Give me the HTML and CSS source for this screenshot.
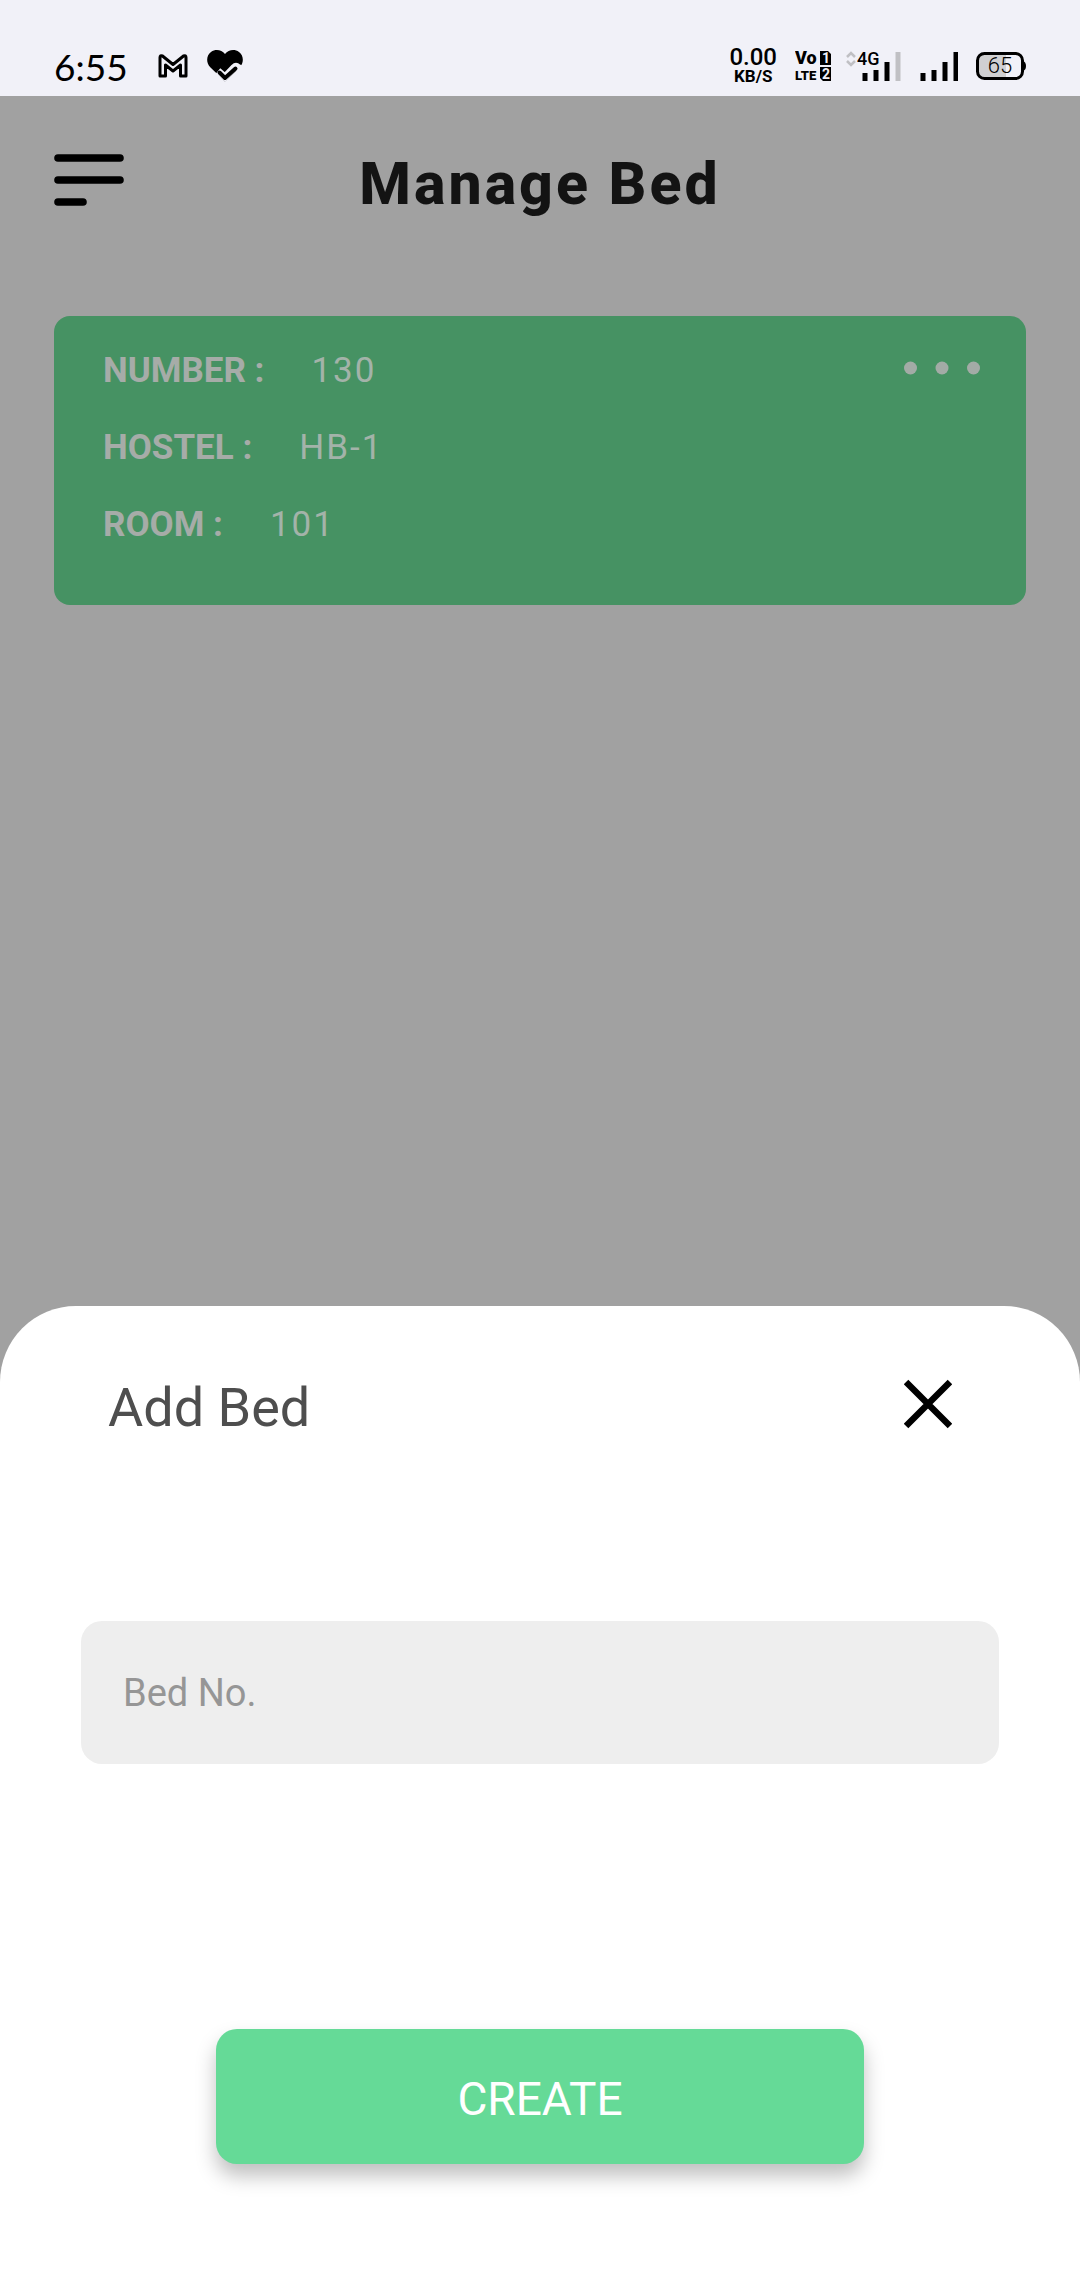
FILE: index.html
```html
<!DOCTYPE html>
<html lang="en">
<head>
  <meta charset="utf-8">
  <meta name="viewport" content="width=device-width, initial-scale=1">
  <title>Manage Bed</title>
  <link rel="stylesheet" href="styles.css">
</head>
<body>
  <div class="status-bar">
    <div class="status-left">
      <span class="clock">6:55</span>
      <svg class="mail-icon" width="30" height="24" viewBox="0 0 30 24" aria-hidden="true">
        <path d="M2 22V3.500Q2 1 4.500 2L15 10.500 25.500 2Q28 1 28 3.500V22H22.500V11L15 17 7.500 11V22Z" fill="none" stroke="#000" stroke-width="3" stroke-linejoin="round"/>
      </svg>
      <svg class="heart-icon" width="36" height="32" viewBox="0 0 36 32" aria-hidden="true">
        <path d="M18 31.500L3.500 17.500C-1.500 12.500-.5 5 4 2 8.500-1.200 14.500-.3 18 4 21.500-.3 27.500-1.200 32 2 36.500 5 37.500 12.500 32.500 17.500Z"/>
        <path d="M11 21L18 27 27 17.500Q29 15.500 31 17.500L36 20" fill="none" stroke="#f1f1f8" stroke-width="7"/>
        <path d="M12.500 22.500L18 28 28.500 18.500" fill="none" stroke="#000" stroke-width="4" stroke-linecap="round" stroke-linejoin="round"/>
      </svg>
    </div>
    <div class="status-right">
      <div class="net-speed"><span class="rate">0.00</span><span class="unit">KB/S</span></div>
      <svg class="volte-icon" width="38" height="44" viewBox="0 -6 38 44" role="img" aria-label="VoLTE">
        <text x="0" y="14" class="volte-top">Vo</text>
        <text x="0" y="30" class="volte-bottom">LTE</text>
        <path d="M25 1H33L36 4V15H25ZM25 17H36V31H28L25 28Z"/>
        <text x="27" y="13" class="sim">1</text>
        <text x="27" y="29" class="sim">2</text>
      </svg>
      <svg class="cell-icon" width="56" height="44" viewBox="0 -6 56 44" role="img" aria-label="4G signal">
        <path d="M1 7L5 3 9 7M1 11L5 15 9 11" fill="none" stroke="#c0c0c4" stroke-width="2.500"/>
        <text x="11" y="15" class="network">4G</text>
        <path d="M19 31V23M30 31V20M41 31V12" class="bars"/>
        <path d="M52 31V2" class="bars bar-off"/>
      </svg>
      <svg class="signal-icon" width="38" height="44" viewBox="0 -6 38 44" role="img" aria-label="Full signal">
        <path d="M3 31V23M14 31V20M25 31V12M36 31V2" class="bars"/>
      </svg>
      <svg class="battery-icon" width="50" height="30" viewBox="0 0 50 30" role="img" aria-label="Battery 65 percent">
        <path d="M10 3H30V27H10Q2 27 2 19V11Q2 3 10 3Z" fill="#d0d0d2"/>
        <rect x="1.500" y="2.500" width="45" height="25" rx="7" fill="none" stroke="#000" stroke-width="3"/>
        <path d="M47 10Q50 11 50 15T47 20Z"/>
        <text x="24" y="22" class="percent">65</text>
      </svg>
    </div>
  </div>

  <main class="page">
    <header class="page-header">
      <button class="icon-button menu-button" type="button" aria-label="Open menu">
        <svg width="70" height="60" viewBox="0 0 70 60">
          <path d="M4 8H66M4 30H66M4 52H29" fill="none" stroke="#000" stroke-width="7.600" stroke-linecap="round"/>
        </svg>
      </button>
      <h1 class="page-title">Manage Bed</h1>
    </header>
    <article class="bed-card">
      <dl class="bed-details">
        <div class="detail"><dt>NUMBER :</dt><dd>130</dd></div>
        <div class="detail"><dt>HOSTEL :</dt><dd>HB-1</dd></div>
        <div class="detail"><dt>ROOM :</dt><dd>101</dd></div>
      </dl>
      <button class="icon-button more-button" type="button" aria-label="More options">
        <svg width="76" height="36" viewBox="0 0 76 36" fill="#a3aba6">
          <circle cx="6.500" cy="18" r="6.500"/><circle cx="38" cy="18" r="6.500"/><circle cx="69.500" cy="18" r="6.500"/>
        </svg>
      </button>
    </article>
  </main>

  <section class="sheet" role="dialog" aria-labelledby="sheet-title">
    <div class="sheet-header">
      <h2 class="sheet-title" id="sheet-title">Add Bed</h2>
      <button class="icon-button close-button" type="button" aria-label="Close">
        <svg width="48" height="58" viewBox="0 0 48 58">
          <path d="M2 6L46 50M46 6L2 50" fill="none" stroke="#000" stroke-width="6.500"/>
        </svg>
      </button>
    </div>
    <form class="bed-form">
      <input class="bed-input" type="text" name="bed" placeholder="Bed No." aria-label="Bed No.">
      <button class="create-button" type="submit">CREATE</button>
    </form>
  </section>
</body>
</html>
```
FILE: styles.css
```css
* {
  box-sizing: border-box;
}

body {
  margin: 0;
  min-height: 100vh;
  display: flex;
  flex-direction: column;
  background: #a1a1a1;
  font-family: Roboto, sans-serif;
}

h1, h2, dl, dd {
  margin: 0;
}

.status-bar {
  display: flex;
  justify-content: space-between;
  height: 96px;
  padding: 36px 5% 0;
  background: #f1f1f8;
  color: #000;
}

.status-left,
.status-right {
  display: flex;
  align-items: center;
}

.status-right {
  gap: 18px;
}

.clock {
  padding-top: 2px;
  font: 37px/44px Lato, sans-serif;
}

.mail-icon {
  margin-left: 30px;
}

.heart-icon {
  margin-left: 19px;
}

.net-speed {
  display: flex;
  flex-direction: column;
  align-items: center;
}

.rate {
  font-size: 24px;
  font-weight: 500;
  line-height: 20px;
}

.unit {
  font-size: 17px;
  font-weight: 700;
  line-height: 18px;
}

.volte-top {
  font-size: 18px;
  font-weight: 900;
}

.volte-bottom {
  font-size: 13px;
  font-weight: 900;
}

.sim {
  font-size: 14px;
  font-weight: 700;
  fill: #f1f1f8;
}

.cell-icon {
  margin-left: -5px;
}

.network {
  font-size: 18px;
  font-weight: 500;
}

.bars {
  fill: none;
  stroke: #000;
  stroke-width: 5px;
}

.bar-off {
  stroke: #c0c0c4;
}

.percent {
  font-size: 22px;
  font-weight: 300;
  text-anchor: middle;
}

.icon-button {
  display: block;
  padding: 0;
  border: 0;
  background: none;
}

.icon-button svg {
  display: block;
}

.page {
  flex: 1;
  padding: 54px 5%;
}

.page-header {
  display: grid;
  grid-template-columns: 1fr auto 1fr;
  align-items: start;
  margin-bottom: 98px;
}

.menu-button {
  justify-self: start;
}

.page-title {
  color: #131313;
  font-size: 59px;
  font-weight: 800;
  line-height: 68px;
  letter-spacing: 3px;
}

.bed-card {
  display: flex;
  align-items: flex-start;
  justify-content: space-between;
  padding: 34px 46px 60px 49px;
  border-radius: 16px;
  background: #469263;
}

.bed-details {
  display: grid;
  gap: 36px;
}

.detail {
  display: flex;
  gap: 47px;
  font-size: 35px;
  line-height: 41px;
}

.detail dt {
  color: #a6aca8;
  font-weight: 700;
}

.detail dd {
  color: #a3b3a9;
  letter-spacing: 2px;
}

.sheet {
  padding: 70px 0 116px;
  border-radius: 76px 76px 0 0;
  background: #fff;
}

.sheet-header {
  display: flex;
  align-items: flex-start;
  justify-content: space-between;
  padding: 0 128px 0 108px;
}

.sheet-title {
  color: #4e4e4e;
  font-size: 54px;
  font-weight: 400;
  line-height: 64px;
}

.bed-form {
  display: flex;
  flex-direction: column;
  align-items: center;
  margin-top: 181px;
}

.bed-input {
  width: 85%;
  height: 143px;
  padding: 0 42px;
  border: 0;
  border-radius: 21px;
  background: #eee;
  color: #4e4e4e;
  font: 38px/44px Roboto, sans-serif;
}

.bed-input::placeholder {
  color: #969696;
  opacity: 1;
}

.create-button {
  width: 60%;
  height: 135px;
  margin-top: 265px;
  padding: 4px 0 0;
  border: 0;
  border-radius: 21px;
  background: #65da97;
  box-shadow: 0 12px 20px rgb(0 0 0 / 25%);
  color: #fff;
  font: 46px/54px Roboto, sans-serif;
}
```
